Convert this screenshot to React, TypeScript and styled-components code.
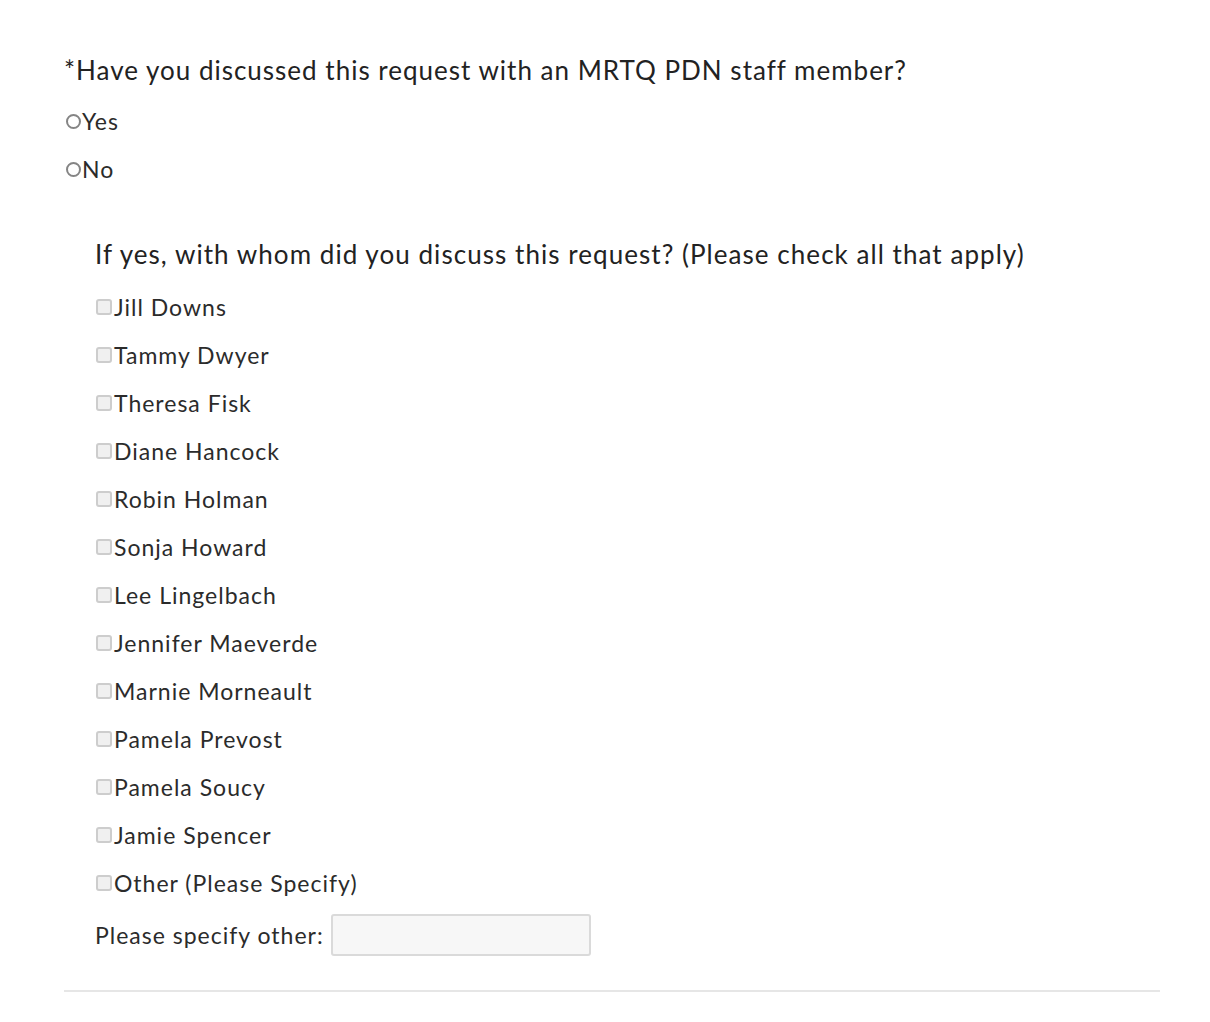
import * as React from "react";
import styled, { createGlobalStyle } from "styled-components";

const GlobalStyle = createGlobalStyle`
  body {
    margin: 0;
    background: #ffffff;
    font-family: Lato, "Open Sans", sans-serif;
    color: #2b2b2b;
  }
`;

const Page = styled.div`
  padding: 46px 50px 30px 64px;
`;

const Question = styled.div`
  font-size: 26px;
  line-height: 48px;
  letter-spacing: 1px;
  margin-bottom: 3px;
  color: #222;
`;

const SubQuestion = styled.div`
  font-size: 26px;
  line-height: 58px;
  letter-spacing: 1.05px;
  color: #222;
`;

const Option = styled.label`
  display: flex;
  align-items: center;
  height: 48px;
  font-size: 23px;
  letter-spacing: 1px;
  color: #2b2b2b;
`;

const Radio = styled.input.attrs({ type: "radio" })`
  appearance: none;
  flex-shrink: 0;
  margin: 0 1px 0 2px;
  width: 15px;
  height: 15px;
  border: 2px solid #858585;
  border-radius: 50%;
  background: #fff;
  box-sizing: border-box;
`;

const Checkbox = styled.input.attrs({ type: "checkbox" })`
  appearance: none;
  flex-shrink: 0;
  margin: 0 2px 0 1px;
  width: 16px;
  height: 16px;
  border: 2px solid #cdcdcd;
  border-radius: 3px;
  background: #f0f0f0;
  box-sizing: border-box;
`;

const SubSection = styled.div`
  padding-left: 31px;
  margin-top: 32px;
`;

const SpecifyRow = styled.label`
  display: flex;
  align-items: center;
  gap: 7px;
  height: 56px;
  font-size: 23px;
  letter-spacing: 1px;
  color: #2b2b2b;
`;

const TextBox = styled.input.attrs({ type: "text" })`
  flex-shrink: 0;
  width: 260px;
  height: 42px;
  box-sizing: border-box;
  border: 2px solid #dadada;
  border-radius: 3px;
  background: #f7f7f7;
`;

const Divider = styled.hr`
  margin: 27px 0 0 0;
  border: none;
  border-top: 2px solid #e6e6e6;
`;

const staff = [
  "Jill Downs",
  "Tammy Dwyer",
  "Theresa Fisk",
  "Diane Hancock",
  "Robin Holman",
  "Sonja Howard",
  "Lee Lingelbach",
  "Jennifer Maeverde",
  "Marnie Morneault",
  "Pamela Prevost",
  "Pamela Soucy",
  "Jamie Spencer",
  "Other (Please Specify)",
];

export default function App() {
  return (
    <Page>
      <GlobalStyle />
      <Question>*Have you discussed this request with an MRTQ PDN staff member?</Question>
      <Option>
        <Radio name="discussed" />
        Yes
      </Option>
      <Option>
        <Radio name="discussed" />
        No
      </Option>
      <SubSection>
        <SubQuestion>If yes, with whom did you discuss this request? (Please check all that apply)</SubQuestion>
        {staff.map((name) => (
          <Option key={name}>
            <Checkbox />
            {name}
          </Option>
        ))}
        <SpecifyRow>
          Please specify other:
          <TextBox />
        </SpecifyRow>
      </SubSection>
      <Divider />
    </Page>
  );
}
